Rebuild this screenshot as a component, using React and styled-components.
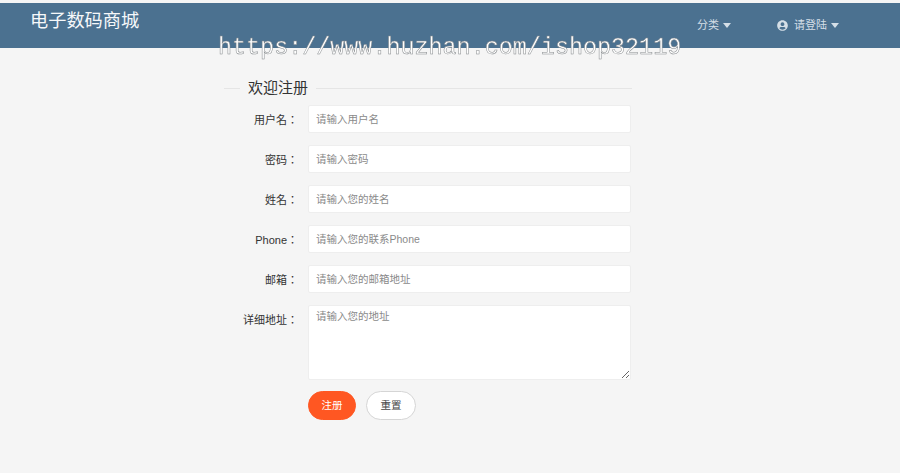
import React from 'react';
import styled, { createGlobalStyle } from 'styled-components';
import { FaUserCircle } from 'react-icons/fa';

const GlobalStyle = createGlobalStyle`
  html, body {
    margin: 0;
    padding: 0;
    background: #f5f5f5;
    font-family: "Liberation Sans", "Noto Sans CJK SC", sans-serif;
  }
`;

const Page = styled.div`
  position: relative;
  width: 900px;
  height: 473px;
  overflow: hidden;
  padding-top: 3px;
  box-sizing: border-box;
  background: #f5f5f5;
`;

const Header = styled.header`
  display: flex;
  justify-content: space-between;
  height: 45px;
  background: #4b7190;
  color: #fff;
`;

const Brand = styled.div`
  margin: 6px 0 0 30px;
  font-size: 18.2px;
  line-height: 24px;
  color: #f6f8fa;
`;

const Nav = styled.nav`
  display: flex;
  align-items: flex-start;
  margin: 14px 61px 0 0;
`;

const NavItem = styled.div`
  display: flex;
  align-items: center;
  margin-left: ${props => props.$gap}px;
  font-size: 11px;
  line-height: 17px;
  color: #d5dfe7;
`;

const Caret = styled.span`
  width: 0;
  height: 0;
  margin-left: 4px;
  border-left: 4.5px solid transparent;
  border-right: 4.5px solid transparent;
  border-top: 5px solid #d5dfe7;
`;

const UserIcon = styled(FaUserCircle)`
  width: 11px;
  height: 11px;
  margin-right: 6px;
`;

const Watermark = styled.div`
  position: absolute;
  left: 218px;
  top: 34px;
  font-family: "Liberation Mono", monospace;
  font-size: 23.4px;
  line-height: 28px;
  white-space: nowrap;
  color: #fff;
  -webkit-text-stroke: 0.5px #85898c;
  -webkit-font-smoothing: antialiased;
  will-change: transform;
`;

const Form = styled.form`
  width: 408px;
  margin: 31px 0 0 224px;
`;

const Legend = styled.div`
  display: flex;
  align-items: center;
  height: 18px;
  margin-bottom: 8px;
  font-size: 15px;
  line-height: 16px;
  color: #333;
  &::before {
    content: "";
    width: 16px;
    height: 1px;
    margin-right: 8px;
    background: #e5e5e5;
  }
  &::after {
    content: "";
    flex: 1;
    height: 1px;
    margin-left: 8px;
    background: #e5e5e5;
  }
`;

const Row = styled.div`
  display: flex;
  align-items: ${props => (props.$top ? 'flex-start' : 'center')};
  margin-top: ${props => (props.$first ? 0 : 12)}px;
`;

const Label = styled.label`
  flex: none;
  width: 74px;
  margin-right: 10px;
  padding-top: ${props => (props.$top ? 7 : 1)}px;
  text-align: right;
  font-family: "Liberation Sans", "Noto Sans CJK TC", sans-serif;
  font-size: 11px;
  line-height: 16px;
  color: #333;
`;

const Input = styled.input`
  flex: none;
  box-sizing: border-box;
  width: 323px;
  height: 28px;
  padding: 0 7px;
  border: 1px solid #eeeeee;
  border-radius: 2px;
  background: #fff;
  font-family: inherit;
  font-size: 10.5px;
  outline: none;
  &::placeholder {
    color: #8a8a8a;
    opacity: 1;
  }
`;

const TextArea = styled.textarea`
  display: block;
  flex: none;
  box-sizing: border-box;
  width: 323px;
  height: 75px;
  padding: 3px 7px;
  border: 1px solid #eeeeee;
  border-radius: 2px;
  background: #fff;
  font-family: inherit;
  font-size: 10.5px;
  line-height: 14px;
  outline: none;
  &::placeholder {
    color: #8a8a8a;
    opacity: 1;
  }
`;

const Buttons = styled.div`
  display: flex;
  gap: 10px;
  margin: 11px 0 0 84px;
`;

const Button = styled.button`
  box-sizing: border-box;
  width: ${props => (props.$primary ? 48 : 50)}px;
  height: 29px;
  padding: 0 0 2px;
  border: 1px solid ${props => (props.$primary ? '#ff5722' : '#d5d5d5')};
  border-radius: 15px;
  background: ${props => (props.$primary ? '#ff5722' : '#fff')};
  color: ${props => (props.$primary ? '#fff' : '#444')};
  font-family: inherit;
  font-size: 10.5px;
`;

const fields = [
  { label: '用户名：', placeholder: '请输入用户名' },
  { label: '密码：', placeholder: '请输入密码' },
  { label: '姓名：', placeholder: '请输入您的姓名' },
  { label: 'Phone：', placeholder: '请输入您的联系Phone' },
  { label: '邮箱：', placeholder: '请输入您的邮箱地址' },
];

export default function App() {
  return (
    <Page>
      <GlobalStyle />
      <Header>
        <Brand>电子数码商城</Brand>
        <Nav>
          <NavItem $gap={0}>分类<Caret /></NavItem>
          <NavItem $gap={46}><UserIcon />请登陆<Caret /></NavItem>
        </Nav>
      </Header>
      <Form>
        <Legend>欢迎注册</Legend>
        {fields.map((field, i) => (
          <Row key={field.label} $first={i === 0}>
            <Label>{field.label}</Label>
            <Input placeholder={field.placeholder} />
          </Row>
        ))}
        <Row $top>
          <Label $top>详细地址：</Label>
          <TextArea placeholder="请输入您的地址" />
        </Row>
        <Buttons>
          <Button type="button" $primary>注册</Button>
          <Button type="button">重置</Button>
        </Buttons>
      </Form>
      <Watermark>https://www.huzhan.com/ishop32119</Watermark>
    </Page>
  );
}
